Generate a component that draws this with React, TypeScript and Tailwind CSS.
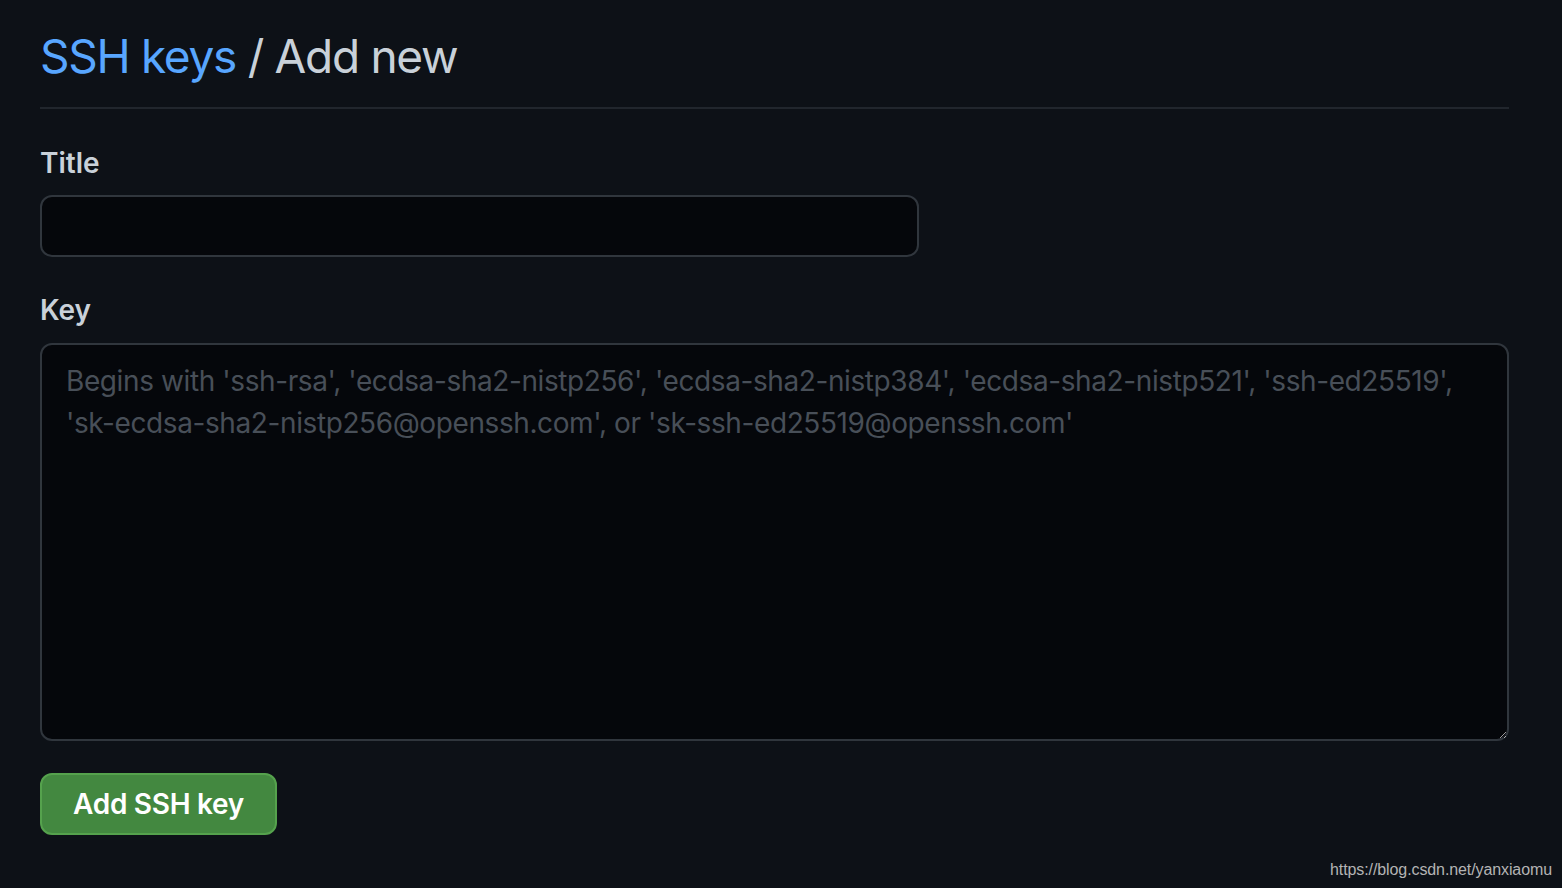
export default function App() {
  return (
    <div className="relative min-h-screen w-full bg-[#0d1117] font-['Inter','Noto_Sans',sans-serif]">
      <div className="px-[40px] pr-[53px]">
        {/* Header */}
        <div className="border-b-2 border-[#21262d] pt-[26px] pb-[21px]">
          <h1 className="text-[46px] leading-[60px] font-normal tracking-[-1.3px] text-[#c9d1d9]">
            <a href="#" className="text-[#58a6ff]">SSH keys</a> / Add new
          </h1>
        </div>

        <form className="pt-[33px]" onSubmit={(e) => e.preventDefault()}>
          <label className="block text-[28px] leading-[42px] font-semibold text-[#c9d1d9]">Title</label>
          <input
            type="text"
            className="mt-[11px] block h-[62px] w-[879px] rounded-[12px] border-2 border-[#30363d] bg-[#05070b] px-[24px] text-[28px] text-[#c9d1d9] outline-none"
          />

          <label className="mt-[32px] block text-[28px] leading-[42px] font-semibold text-[#c9d1d9]">Key</label>
          <textarea
            placeholder="Begins with 'ssh-rsa', 'ecdsa-sha2-nistp256', 'ecdsa-sha2-nistp384', 'ecdsa-sha2-nistp521', 'ssh-ed25519', 'sk-ecdsa-sha2-nistp256@openssh.com', or 'sk-ssh-ed25519@openssh.com'"
            className="mt-[12px] block h-[398px] w-full rounded-[12px] border-2 border-[#30363d] bg-[#05070b] px-[24px] py-[15px] text-[28px] leading-[42px] tracking-[-0.4px] text-[#c9d1d9] placeholder:text-[#484f58] outline-none [color-scheme:dark]"
          />

          <button
            type="submit"
            className="mt-[32px] flex h-[62px] w-[237px] items-center justify-center rounded-[12px] border-2 border-[#55a24d] bg-[#438840] text-[28px] font-semibold tracking-[-0.3px] text-white"
          >
            Add SSH key
          </button>
        </form>
      </div>

      {/* watermark */}
      <div className="absolute right-[10px] bottom-[6px] font-['Liberation_Sans',Arial,sans-serif] text-[16px] tracking-[-0.1px] text-[#b4b4b4]">
        https://blog.csdn.net/yanxiaomu
      </div>
    </div>
  );
}
